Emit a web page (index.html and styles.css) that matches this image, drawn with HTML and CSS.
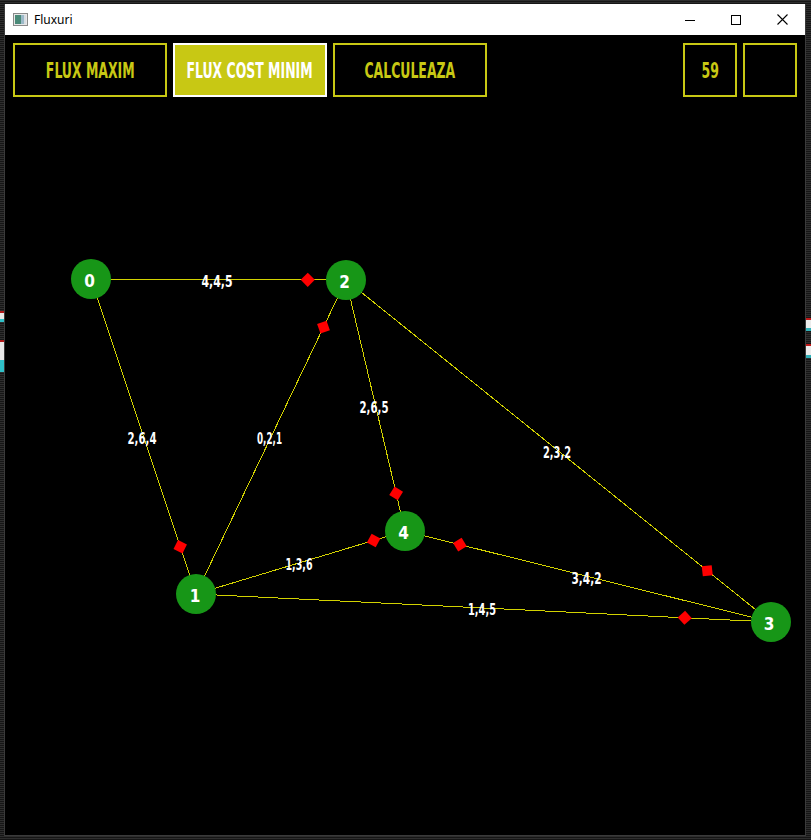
FILE: index.html
```html
<!DOCTYPE html>
<html>
<head>
<meta charset="utf-8">
<title>Fluxuri</title>
<link rel="stylesheet" href="styles.css">
</head>
<body>
<div class="glitch g1"></div>
<div class="glitch g2"></div>
<div class="glitch g3"></div>
<div class="glitch g4"></div>
<div class="window">
  <div class="titlebar">
    <div class="title">
      <svg class="appicon" width="15" height="13" viewBox="0 0 15 13">
        <rect x="0.5" y="0.5" width="14" height="12" fill="#e8e8e8" stroke="#8a8a8a"/>
        <rect x="2" y="2" width="6" height="9" fill="#4a8a78"/>
        <rect x="8" y="2" width="3" height="9" fill="#9bb9c8"/>
        <rect x="11" y="2" width="2" height="9" fill="#d8dde2"/>
      </svg>
      <span class="title-text">Fluxuri</span>
    </div>
    <div class="controls">
      <div class="ctl"><svg width="10" height="10" viewBox="0 0 10 10"><line x1="0" y1="5.5" x2="10" y2="5.5" stroke="#000" stroke-width="1"/></svg></div>
      <div class="ctl"><svg width="10" height="10" viewBox="0 0 10 10"><rect x="0.5" y="0.5" width="9" height="9" fill="none" stroke="#000" stroke-width="1"/></svg></div>
      <div class="ctl"><svg width="11" height="11" viewBox="0 0 11 11"><path d="M0.5 0.5 L10.5 10.5 M10.5 0.5 L0.5 10.5" stroke="#000" stroke-width="1.1"/></svg></div>
    </div>
  </div>
  <div class="client">
    <div class="toolbar">
      <div class="btn"><span class="btxt">FLUX MAXIM</span></div>
      <div class="btn active"><span class="btxt">FLUX COST MINIM</span></div>
      <div class="btn"><span class="btxt">CALCULEAZA</span></div>
      <div class="spacer"></div>
      <div class="box"><span class="btxt">59</span></div>
      <div class="box"></div>
    </div>
    <svg class="graph" width="800" height="800" viewBox="5 35 800 800">
      <g class="edges">
        <line x1="91" y1="279" x2="346" y2="280"/>
        <line x1="91" y1="279" x2="196" y2="594"/>
        <line x1="196" y1="594" x2="346" y2="280"/>
        <line x1="346" y1="280" x2="405" y2="531"/>
        <line x1="346" y1="280" x2="771" y2="622"/>
        <line x1="196" y1="594" x2="405" y2="531"/>
        <line x1="771" y1="622" x2="405" y2="531"/>
        <line x1="196" y1="594" x2="771" y2="622"/>
      </g>
      <g class="arrows">
        <rect x="-5" y="-5" width="10" height="10" transform="translate(307.75 279.85) rotate(45.2)"/>
        <rect x="-5" y="-5" width="10" height="10" transform="translate(180.25 546.75) rotate(116.57)"/>
        <rect x="-5" y="-5" width="10" height="10" transform="translate(323.5 327.1) rotate(-19.46)"/>
        <rect x="-5" y="-5" width="10" height="10" transform="translate(396.15 493.35) rotate(121.77)"/>
        <rect x="-5" y="-5" width="10" height="10" transform="translate(707.25 570.7) rotate(83.82)"/>
        <rect x="-5" y="-5" width="10" height="10" transform="translate(373.65 540.45) rotate(28.22)"/>
        <rect x="-5" y="-5" width="10" height="10" transform="translate(459.9 544.65) rotate(-121.04)"/>
        <rect x="-5" y="-5" width="10" height="10" transform="translate(684.75 617.8) rotate(47.79)"/>
      </g>
      <g class="elabels">
        <text x="217" y="281" textLength="31" lengthAdjust="spacingAndGlyphs">4,4,5</text>
        <text x="142" y="438" textLength="29" lengthAdjust="spacingAndGlyphs">2,6,4</text>
        <text x="269.5" y="438.5" textLength="25" lengthAdjust="spacingAndGlyphs">0,2,1</text>
        <text x="374" y="407" textLength="29" lengthAdjust="spacingAndGlyphs">2,6,5</text>
        <text x="557" y="452.5" textLength="28" lengthAdjust="spacingAndGlyphs">2,3,2</text>
        <text x="299" y="564" textLength="27" lengthAdjust="spacingAndGlyphs">1,3,6</text>
        <text x="586.5" y="578" textLength="30" lengthAdjust="spacingAndGlyphs">3,4,2</text>
        <text x="482" y="609.5" textLength="28" lengthAdjust="spacingAndGlyphs">1,4,5</text>
      </g>
      <g class="nodes">
        <circle cx="91" cy="279" r="20"/>
        <circle cx="196" cy="594" r="20"/>
        <circle cx="346" cy="280" r="20"/>
        <circle cx="771" cy="622" r="20"/>
        <circle cx="405" cy="531" r="20"/>
      </g>
      <g class="nlabels">
        <text x="89.5" y="280.5">0</text>
        <text x="195" y="595.5">1</text>
        <text x="344.5" y="281.5">2</text>
        <text x="769" y="623.5">3</text>
        <text x="403.5" y="532.5">4</text>
      </g>
    </svg>
  </div>
</div>
</body>
</html>
```

FILE: styles.css
```css
html, body {
  margin: 0;
  padding: 0;
}
body {
  width: 811px;
  height: 840px;
  overflow: hidden;
  padding: 4px 0 0 4px;
  box-sizing: border-box;
  position: relative;
  background: repeating-linear-gradient(to bottom, #2e2e2e 0 1px, #161616 1px 2px);
}
.glitch {
  position: absolute;
  width: 4px;
}
.g1 { left: 0; top: 311px; height: 11px; background: linear-gradient(#b01818 0 2px, #e8e8e8 2px 8px, #30c0c8 8px); }
.g2 { left: 0; top: 340px; height: 32px; background: linear-gradient(#b01818 0 2px, #e8e8e8 2px 20px, #30c0c8 20px); }
.g3 { right: 0; top: 318px; width: 5px; height: 13px; background: linear-gradient(#c01818 0 2px, #ececec 2px 10px, #30b0b8 10px); }
.g4 { right: 0; top: 344px; width: 5px; height: 14px; background: linear-gradient(#c01818 0 2px, #ececec 2px 11px, #30b0b8 11px); }

.window {
  width: 802px;
  border: 1px solid #3a3a3a;
  border-top: 0;
  box-sizing: border-box;
  background: #000;
  position: relative;
}
.titlebar {
  height: 31px;
  background: #fff;
  display: flex;
  justify-content: space-between;
  align-items: stretch;
}
.title {
  display: flex;
  align-items: center;
  padding-left: 8px;
  gap: 6px;
}
.appicon {
  display: block;
}
.title-text {
  font-family: "Noto Sans", "Open Sans", sans-serif;
  font-size: 12px;
  color: #000;
}
.controls {
  display: flex;
}
.ctl {
  width: 46px;
  display: flex;
  align-items: center;
  justify-content: center;
}
.ctl svg {
  display: block;
}
.client {
  position: relative;
  height: 800px;
  background: #000;
}
.toolbar {
  display: flex;
  gap: 6px;
  padding: 8px 8px 0 8px;
  position: relative;
  z-index: 1;
}
.spacer {
  flex: 1;
}
.btn, .box {
  height: 54px;
  box-sizing: border-box;
  border: 2px solid #c8c814;
  display: flex;
  align-items: center;
  justify-content: center;
  color: #c8c814;
  background: #000;
}
.btn {
  width: 154px;
}
.box {
  width: 54px;
}
.btn.active {
  background: #c8c814;
  border-color: #fff;
  color: #fff;
}
.btxt {
  display: inline-block;
  font-family: "DejaVu Sans Condensed", "DejaVu Sans", sans-serif;
  font-stretch: condensed;
  font-weight: bold;
  font-size: 21px;
  line-height: 1;
  white-space: nowrap;
  transform: scaleX(0.66);
  margin-top: 2px;
}
.graph {
  position: absolute;
  left: 0;
  top: 0;
  display: block;
}
.edges line {
  stroke: #d2d200;
  stroke-width: 1;
  shape-rendering: crispEdges;
}
.arrows rect {
  fill: #ff0000;
}
.nodes circle {
  fill: #179617;
}
.elabels text, .nlabels text {
  font-family: "DejaVu Sans Condensed", "DejaVu Sans", sans-serif;
  font-stretch: condensed;
  font-weight: bold;
  fill: #fff;
  text-anchor: middle;
  dominant-baseline: central;
}
.elabels text {
  font-size: 16.5px;
}
.nlabels text {
  font-size: 17px;
}
```
